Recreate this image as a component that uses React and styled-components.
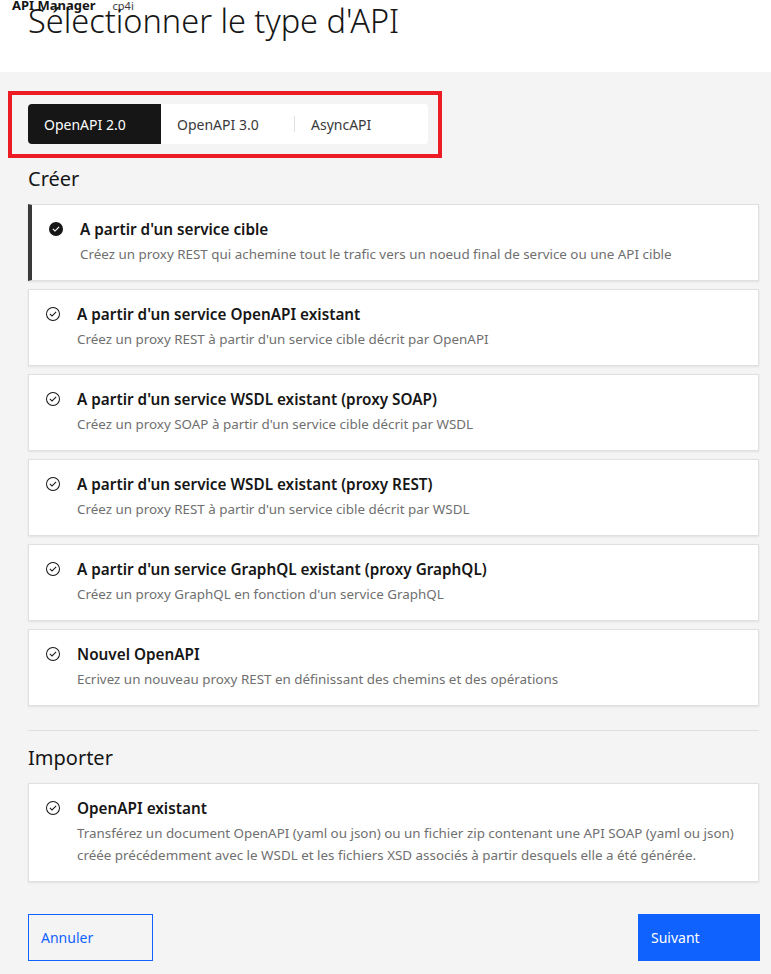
import React from "react";
import styled, { createGlobalStyle } from "styled-components";

const Global = createGlobalStyle`
  html, body { margin: 0; padding: 0; background: #f4f4f4; }
  body { font-family: "Noto Sans", "Liberation Sans", sans-serif; color: #161616; }
  * { box-sizing: border-box; }
`;

const Page = styled.div`
  width: 771px;
  min-height: 974px;
  background: #f4f4f4;
  overflow: hidden;
`;

const Header = styled.header`
  background: #ffffff;
  height: 72px;
  display: grid;
  grid-template-areas: "stack";
  align-items: start;
`;

const Brand = styled.div`
  grid-area: stack;
  display: flex;
  align-items: baseline;
  gap: 17px;
  padding-left: 12px;
  margin-top: -2px;
  line-height: 15px;
`;

const BrandName = styled.span`
  font-size: 13px;
  font-weight: 700;
  color: #161616;
`;

const BrandTag = styled.span`
  font-size: 11px;
  color: #393939;
`;

const Title = styled.h1`
  grid-area: stack;
  margin: 0;
  padding-left: 28px;
  font-size: 32.5px;
  line-height: 42px;
  font-weight: 300;
  color: #161616;
`;

const Main = styled.main`
  padding: 19px 12px 0 28px;
  display: flex;
  flex-direction: column;
`;

const Highlight = styled.div`
  align-self: flex-start;
  margin-left: -20px;
  border: 4px solid #ed1c24;
  padding: 9px 10px 10px 16px;
`;

const Tabs = styled.div`
  display: flex;
  align-items: center;
  width: 400px;
  height: 40px;
  background: #ffffff;
  border-radius: 4px;
`;

const Tab = styled.button`
  flex: 1;
  height: 40px;
  border: none;
  margin: 0;
  padding: 0 16px;
  text-align: left;
  font-family: inherit;
  font-size: 14px;
  background: ${(p) => (p.$active ? "#161616" : "transparent")};
  color: ${(p) => (p.$active ? "#ffffff" : "#393939")};
  border-radius: ${(p) => (p.$active ? "4px 0 0 4px" : "0")};
  cursor: pointer;
`;

const TabDivider = styled.span`
  width: 1px;
  height: 16px;
  background: #e0e0e0;
`;

const SectionHeading = styled.h2`
  margin: ${(p) => p.$top || "8px"} 0 12px;
  font-size: 20px;
  line-height: 26px;
  font-weight: 400;
  color: #161616;
`;

const CardList = styled.div`
  display: flex;
  flex-direction: column;
  gap: 8px;
`;

const Card = styled.div`
  display: flex;
  gap: 16px;
  align-items: flex-start;
  background: #ffffff;
  border: 1px solid #e0e0e0;
  border-left: ${(p) => (p.$selected ? "4px solid #393939" : "1px solid #e0e0e0")};
  box-shadow: 0 1px 2px rgba(0, 0, 0, 0.08);
  padding: 14px 16px 15px;
  cursor: pointer;
`;

const IconBox = styled.span`
  flex: none;
  width: 16px;
  height: 20px;
  display: flex;
  align-items: center;
  color: #161616;
`;

const CardBody = styled.div`
  display: flex;
  flex-direction: column;
  gap: 4px;
`;

const CardTitle = styled.div`
  font-size: 15.3px;
  line-height: 20px;
  font-weight: 600;
  color: #161616;
`;

const CardDesc = styled.div`
  font-size: 13.4px;
  line-height: 22px;
  color: #6f6f6f;
`;

const Divider = styled.hr`
  border: none;
  height: 1px;
  background: #dde1e6;
  margin: 24px 0 0;
`;

const Footer = styled.div`
  display: flex;
  justify-content: space-between;
  margin-top: 32px;
  margin-right: -1px;
`;

const Button = styled.button`
  height: 47px;
  width: ${(p) => p.$w}px;
  padding: 0 12px;
  text-align: left;
  font-family: inherit;
  font-size: 14px;
  border: 1px solid #0f62fe;
  background: ${(p) => (p.$primary ? "#0f62fe" : "transparent")};
  color: ${(p) => (p.$primary ? "#ffffff" : "#0f62fe")};
  cursor: pointer;
`;

const CheckOutline = () => (
  <svg width="16" height="16" viewBox="0 0 32 32" fill="currentColor" aria-hidden="true">
    <path d="M14 21.414l-5-5.001L10.413 15 14 18.586 21.585 11 23 12.415 14 21.414z" />
    <path d="M16 2a14 14 0 1 0 14 14A14 14 0 0 0 16 2zm0 26a12 12 0 1 1 12-12 12 12 0 0 1-12 12z" />
  </svg>
);

const CheckFilled = () => (
  <svg width="16" height="16" viewBox="0 0 32 32" aria-hidden="true">
    <path fill="currentColor" d="M16 2A14 14 0 1 0 30 16 14 14 0 0 0 16 2z" />
    <path fill="#ffffff" d="M14 21.591l-5-5L10.591 15 14 18.409 21.41 11l1.596 1.586L14 21.591z" />
  </svg>
);

const createOptions = [
  {
    title: "A partir d'un service cible",
    desc: "Créez un proxy REST qui achemine tout le trafic vers un noeud final de service ou une API cible",
    selected: true,
  },
  {
    title: "A partir d'un service OpenAPI existant",
    desc: "Créez un proxy REST à partir d'un service cible décrit par OpenAPI",
  },
  {
    title: "A partir d'un service WSDL existant (proxy SOAP)",
    desc: "Créez un proxy SOAP à partir d'un service cible décrit par WSDL",
  },
  {
    title: "A partir d'un service WSDL existant (proxy REST)",
    desc: "Créez un proxy REST à partir d'un service cible décrit par WSDL",
  },
  {
    title: "A partir d'un service GraphQL existant (proxy GraphQL)",
    desc: "Créez un proxy GraphQL en fonction d'un service GraphQL",
  },
  {
    title: "Nouvel OpenAPI",
    desc: "Ecrivez un nouveau proxy REST en définissant des chemins et des opérations",
  },
];

const OptionCard = ({ title, desc, selected }) => (
  <Card $selected={selected}>
    <IconBox>{selected ? <CheckFilled /> : <CheckOutline />}</IconBox>
    <CardBody>
      <CardTitle>{title}</CardTitle>
      <CardDesc>{desc}</CardDesc>
    </CardBody>
  </Card>
);

export default function App() {
  return (
    <Page>
      <Global />
      <Header>
        <Brand>
          <BrandName>API Manager</BrandName>
          <BrandTag>cp4i</BrandTag>
        </Brand>
        <Title>Sélectionner le type d'API</Title>
      </Header>
      <Main>
        <Highlight>
          <Tabs>
            <Tab $active>OpenAPI 2.0</Tab>
            <Tab>OpenAPI 3.0</Tab>
            <TabDivider />
            <Tab>AsyncAPI</Tab>
          </Tabs>
        </Highlight>
        <SectionHeading>Créer</SectionHeading>
        <CardList>
          {createOptions.map((o) => (
            <OptionCard key={o.title} {...o} />
          ))}
        </CardList>
        <Divider />
        <SectionHeading $top="14px">Importer</SectionHeading>
        <CardList>
          <OptionCard
            title="OpenAPI existant"
            desc={
              <>
                Transférez un document OpenAPI (yaml ou json) ou un fichier zip contenant une API SOAP (yaml ou json)
                <br />
                créée précédemment avec le WSDL et les fichiers XSD associés à partir desquels elle a été générée.
              </>
            }
          />
        </CardList>
        <Footer>
          <Button $w={125}>Annuler</Button>
          <Button $w={122} $primary>
            Suivant
          </Button>
        </Footer>
      </Main>
    </Page>
  );
}
